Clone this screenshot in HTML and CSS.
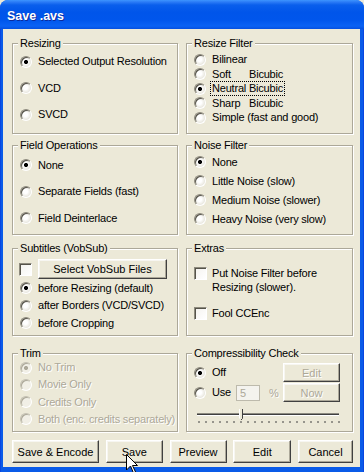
FILE: index.html
```html
<!DOCTYPE html>
<html lang="en">
<head>
    <meta charset="UTF-8">
    <meta name="viewport" content="width=device-width, initial-scale=1.0">
    <title>Save .avs</title>
    <link rel="stylesheet" href="styles.css">
</head>
<body>
    <div class="window">
        <div class="titlebar">Save .avs</div>

        <div class="client">
            <div class="groups">
                <!-- row 1 -->
                <fieldset class="row1">
                    <legend>Resizing</legend>
                    <div class="stack resizing">
                        <label class="opt"><input type="radio" name="resize" checked><span>Selected Output Resolution</span></label>
                        <label class="opt"><input type="radio" name="resize"><span>VCD</span></label>
                        <label class="opt"><input type="radio" name="resize"><span>SVCD</span></label>
                    </div>
                </fieldset>
                <fieldset class="row1">
                    <legend>Resize Filter</legend>
                    <div class="stack filter">
                        <label class="opt"><input type="radio" name="filter"><span>Bilinear</span></label>
                        <label class="opt"><input type="radio" name="filter"><span><span class="word">Soft</span>Bicubic</span></label>
                        <label class="opt"><input type="radio" name="filter" checked><span class="focus">Neutral Bicubic</span></label>
                        <label class="opt"><input type="radio" name="filter"><span><span class="word">Sharp</span>Bicubic</span></label>
                        <label class="opt"><input type="radio" name="filter"><span>Simple (fast and good)</span></label>
                    </div>
                </fieldset>

                <!-- row 2 -->
                <fieldset class="row2">
                    <legend>Field Operations</legend>
                    <div class="stack fields">
                        <label class="opt"><input type="radio" name="field" checked><span>None</span></label>
                        <label class="opt"><input type="radio" name="field"><span>Separate Fields (fast)</span></label>
                        <label class="opt"><input type="radio" name="field"><span>Field Deinterlace</span></label>
                    </div>
                </fieldset>
                <fieldset class="row2">
                    <legend>Noise Filter</legend>
                    <div class="stack noise">
                        <label class="opt"><input type="radio" name="noise" checked><span>None</span></label>
                        <label class="opt"><input type="radio" name="noise"><span>Little Noise (slow)</span></label>
                        <label class="opt"><input type="radio" name="noise"><span>Medium Noise (slower)</span></label>
                        <label class="opt"><input type="radio" name="noise"><span>Heavy Noise (very slow)</span></label>
                    </div>
                </fieldset>

                <!-- row 3 -->
                <fieldset class="row3">
                    <legend>Subtitles (VobSub)</legend>
                    <div class="stack subs">
                        <div class="subline">
                            <input type="checkbox" class="check">
                            <button class="btn vobsub">Select VobSub Files</button>
                        </div>
                        <label class="opt"><input type="radio" name="subs" checked><span>before Resizing (default)</span></label>
                        <label class="opt"><input type="radio" name="subs"><span>after Borders (VCD/SVCD)</span></label>
                        <label class="opt"><input type="radio" name="subs"><span>before Cropping</span></label>
                    </div>
                </fieldset>
                <fieldset class="row3">
                    <legend>Extras</legend>
                    <div class="stack extras">
                        <label class="chk"><input type="checkbox" class="check"><span>Put Noise Filter before<br>Resizing (slower).</span></label>
                        <label class="chk"><input type="checkbox" class="check"><span>Fool CCEnc</span></label>
                    </div>
                </fieldset>

                <!-- row 4 -->
                <fieldset class="row4">
                    <legend>Trim</legend>
                    <div class="stack trim">
                        <label class="opt off"><input type="radio" name="trim" checked disabled><span>No Trim</span></label>
                        <label class="opt off"><input type="radio" name="trim" disabled><span>Movie Only</span></label>
                        <label class="opt off"><input type="radio" name="trim" disabled><span>Credits Only</span></label>
                        <label class="opt off"><input type="radio" name="trim" disabled><span>Both (enc. credits separately)</span></label>
                    </div>
                </fieldset>
                <fieldset class="row4">
                    <legend>Compressibility Check</legend>
                    <div class="comp">
                        <div class="line">
                            <label class="opt"><input type="radio" name="comp" checked><span>Off</span></label>
                            <button class="btn small" disabled>Edit</button>
                        </div>
                        <div class="line second">
                            <label class="opt"><input type="radio" name="comp"><span>Use</span></label>
                            <input class="pct" type="text" value="5" disabled>
                            <span class="dim">%</span>
                            <button class="btn small" disabled>Now</button>
                        </div>
                        <svg class="slider" width="150" height="16" viewBox="0 0 150 16">
                            <rect x="2" y="4" width="142" height="1" fill="#8c8a80"/>
                            <rect x="2" y="5" width="142" height="1" fill="#404040"/>
                            <rect x="2" y="6" width="142" height="1" fill="#ffffff"/>
                            <path d="M4 12v2M11 12v2M18 12v2M25 12v2M32 12v2M39 12v2M46 12v2M53 12v2M60 12v2M67 12v2M74 12v2M81 12v2M88 12v2M95 12v2M102 12v2M109 12v2M116 12v2M123 12v2M130 12v2M137 12v2M144 12v2" stroke="#404040" stroke-width="1"/>
                            <polygon points="44,0 48,0 48,9 46,11 44,9" fill="#ece9d8"/>
                            <path d="M44.5 0v9.5" stroke="#ffffff"/>
                            <path d="M47.5 0v9.5l-1.5 1.5" stroke="#404040" fill="none"/>
                        </svg>
                    </div>
                </fieldset>
            </div>

            <div class="actions">
                <button class="btn encode">Save &amp; Encode</button>
                <button class="btn save">Save</button>
                <button class="btn preview">Preview</button>
                <button class="btn edit">Edit</button>
                <button class="btn cancel">Cancel</button>
            </div>
        </div>

        <!-- mouse pointer over the Save button -->
        <svg class="cursor" width="13" height="21" viewBox="0 0 13 21">
            <polygon points="0.5,0.5 0.5,16 4.5,12 7.5,19 9.5,18 6.5,11.5 11.5,11.5" fill="#ffffff" stroke="#000000" stroke-width="1" stroke-linejoin="miter"/>
        </svg>
    </div>
</body>
</html>
```

FILE: styles.css
```css
body {
    margin: 0;
    background-color: #ece9d8;
    font-family: "Liberation Sans", Arial, sans-serif;
    font-size: 11px;
    letter-spacing: -0.2px;
    color: #000;
}

.window {
    position: relative;
    width: 364px;
    height: 472px;
    box-sizing: border-box;
    display: flex;
    flex-direction: column;
    background: linear-gradient(to right, #0831d9 0, #0a5be8 1px, #0a5be8 calc(100% - 1px), #0831d9 100%);
    border-radius: 8px 8px 0 0;
    overflow: hidden;
}

.titlebar {
    height: 29px;
    box-sizing: border-box;
    padding: 3px 0 0 7px;
    display: flex;
    align-items: center;
    color: #fff;
    font-weight: bold;
    font-size: 12.5px;
    letter-spacing: 0;
    text-shadow: 1px 1px 0 #0c2a9c;
    background: linear-gradient(to bottom, #3d95ff 0, #2b7bf6 2px, #0a5fec 5px, #0055ea 12px, #0056ec 20px, #0a62f4 26px, #0550e0 29px);
}

.client {
    flex: 1;
    margin: 0 4px 5px 3px;
    padding: 8px 7px 4px 9px;
    background-color: #ece9d8;
}

.groups {
    display: grid;
    grid-template-columns: 166px 167px;
    grid-template-rows: 97px 101px 101px 96px;
    column-gap: 8px;
}

fieldset {
    margin: 0;
    padding: 0;
    min-width: 0;
    border: 1px solid #aca899;
    box-shadow: inset 1px 1px 0 #fff, 1px 1px 0 #fff;
}

legend {
    margin-left: 5px;
    padding: 0 2px;
    line-height: 13px;
    background-color: #ece9d8;
}

.row2 { margin-top: 5px; }
.row3 { margin-top: 7px; }
.row4 { margin-top: 11px; }

.stack {
    display: flex;
    flex-direction: column;
    padding-left: 7px;
}

.opt {
    display: flex;
    align-items: center;
    gap: 6px;
    height: 15px;
    line-height: 13px;
    white-space: nowrap;
}

.resizing { padding-top: 4px; gap: 11.5px; }
.fields { padding-top: 5.5px; gap: 11.5px; }
.trim { padding-top: 0; gap: 2.3px; }
.filter { padding-top: 2.5px; }
.filter .opt { height: 14.5px; }
.noise { padding-top: 2.5px; gap: 4px; }
.subs { padding-top: 4px; gap: 2.5px; }
.extras { padding-top: 11px; gap: 11.5px; }

.word {
    display: inline-block;
    width: 37px;
}

.focus {
    margin-left: -1px;
    padding: 0 1px;
    outline: 1px dotted #000;
}

/* radio buttons */
.opt input[type=radio] {
    appearance: none;
    flex: none;
    margin: 0;
    width: 12px;
    height: 12px;
    box-sizing: border-box;
    border-radius: 50%;
    border: 1px solid;
    border-color: #8e8b7e #fff #fff #8e8b7e;
    box-shadow: inset 1px 1px 0 #55534a;
    background: radial-gradient(circle at 45% 45%, #fff 0, #fff 2px, #e4e2d8 6px);
}

.opt input[type=radio]:checked {
    background: radial-gradient(circle at 50% 50%, #000 0, #000 1.8px, transparent 2.3px),
        radial-gradient(circle at 45% 45%, #fff 0, #fff 2px, #e4e2d8 6px);
}

.opt input[type=radio]:disabled {
    border-color: #c2bfb1 #fff #fff #c2bfb1;
    box-shadow: inset 1px 1px 0 #aca899;
    background: #f1efe6;
}

.opt input[type=radio]:disabled:checked {
    background: radial-gradient(circle at 50% 50%, #aca899 0, #aca899 1.8px, transparent 2.3px), #f1efe6;
}

.off span,
.dim {
    color: #aca899;
    text-shadow: 1px 1px 0 #fff;
}

/* check boxes */
.check {
    appearance: none;
    flex: none;
    margin: 0;
    width: 13px;
    height: 13px;
    box-sizing: border-box;
    border: 1px solid;
    border-color: #8e8b7e #fff #fff #8e8b7e;
    box-shadow: inset 1px 1px 0 #55534a;
    background: linear-gradient(135deg, #f4f3ee, #fff);
}

.chk {
    display: flex;
    align-items: flex-start;
    gap: 5px;
    line-height: 14px;
}

.chk .check {
    margin-top: 1px;
}

.subline {
    display: flex;
    align-items: center;
    gap: 6px;
    margin-left: -1px;
    margin-bottom: -1px;
}

/* buttons */
.btn {
    margin: 0;
    padding: 0;
    height: 23px;
    font: inherit;
    color: #000;
    background-color: #ece9d8;
    border: 1px solid;
    border-color: #fff #404040 #404040 #fff;
    box-shadow: inset -1px -1px 0 #aca899, inset 1px 1px 0 #f7f6f1;
}

.btn:disabled {
    color: #aca899;
    text-shadow: 1px 1px 0 #fff;
}

.vobsub {
    width: 129px;
    height: 20px;
}

.comp {
    padding: 3px 12px 0 7px;
}

.line {
    display: flex;
    align-items: center;
}

.line.second {
    margin-top: 1px;
}

.small {
    width: 57px;
    height: 19px;
    margin-left: auto;
}

.pct {
    margin: 0 0 0 5px;
    padding: 0 0 0 3px;
    width: 24px;
    height: 16px;
    box-sizing: border-box;
    font: inherit;
    color: #aca899;
    background-color: #f4f3ee;
    border: 1px solid #bdbaac;
}

.second .dim {
    margin-left: 9px;
}

.slider {
    display: block;
    margin: 7px 0 0 1px;
}

.actions {
    display: flex;
    justify-content: space-between;
    margin-top: 8px;
}

.encode { width: 87px; }
.save { width: 57px; }
.preview { width: 57px; }
.edit { width: 58px; }
.cancel { width: 55px; }

.cursor {
    position: absolute;
    left: 126px;
    top: 454px;
}
```
